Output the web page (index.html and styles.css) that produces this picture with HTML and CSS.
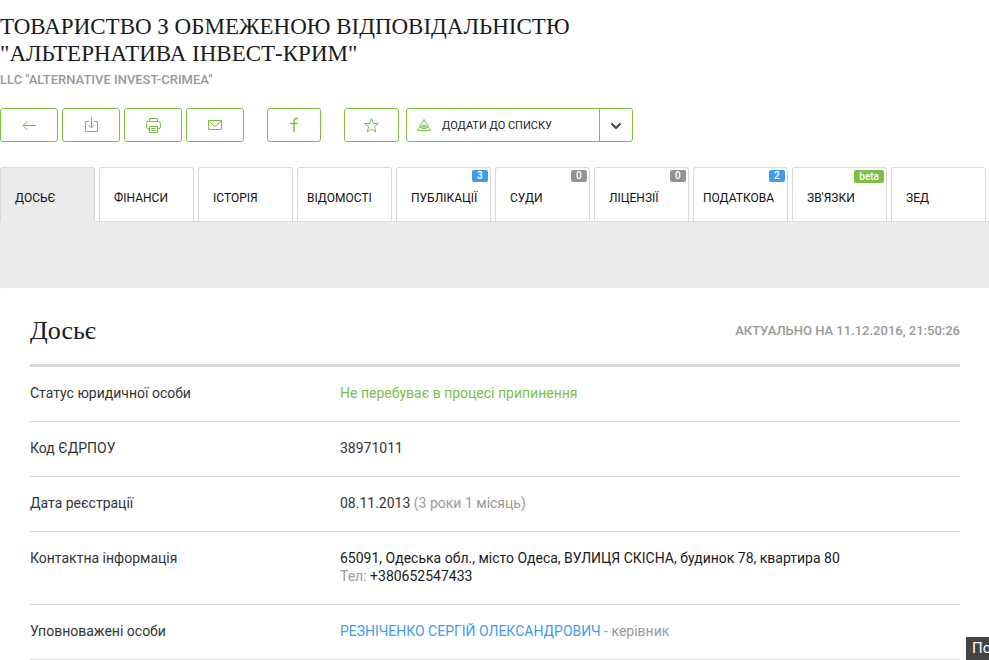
FILE: index.html
```html
<!DOCTYPE html>
<html lang="uk">
<head>
    <meta charset="UTF-8">
    <meta name="viewport" content="width=device-width, initial-scale=1.0">
    <title>Досьє</title>
    <link rel="stylesheet" href="styles.css">
</head>
<body>
    <header class="header">
        <h1>ТОВАРИСТВО З ОБМЕЖЕНОЮ ВІДПОВІДАЛЬНІСТЮ<br>"АЛЬТЕРНАТИВА ІНВЕСТ-КРИМ"</h1>
        <p class="subtitle">LLC "ALTERNATIVE INVEST-CRIMEA"</p>

        <div class="toolbar">
            <div class="tool-group">
                <button class="tool" aria-label="Назад">
                    <svg width="16" height="16" viewBox="0 0 16 16"><path d="M2 8.5H15M6.500 4L2 8.500L6.500 13"/></svg>
                </button>
                <button class="tool" aria-label="Завантажити">
                    <svg width="16" height="18" viewBox="0 0 16 18"><path d="M6 5.500H2.500V15.500H14.500V5.500H11M8.500 1V12M5.500 9L8.500 12L11.500 9"/></svg>
                </button>
                <button class="tool" aria-label="Друк">
                    <svg width="16" height="18" viewBox="0 0 16 18"><path d="M4.500 5.500V2.500H12.500V5.500M4.500 13.500H3.500V12.500H2.500Q1.500 12.500 1.500 11V7.500Q1.500 5.500 3.500 5.500H13.500Q15.500 5.500 15.500 7.500V11Q15.500 12.500 14 12.500H12.500M4.500 10.500H12.500V16.500H4.500ZM6.500 12.500H10.500M6.500 14.500H10.500"/></svg>
                </button>
                <button class="tool" aria-label="Надіслати поштою">
                    <svg width="16" height="16" viewBox="0 0 16 16"><path d="M1.500 3.500H14.500V12.500H1.500ZM1.500 4L8 9.500L14.500 4"/></svg>
                </button>
            </div>
            <button class="tool tool-small" aria-label="Facebook">
                <svg width="16" height="18" viewBox="0 0 16 18"><path class="bold" d="M12 2.500H10.500Q8 2.500 8 5V16M4 7.500H11.500"/></svg>
            </button>
            <div class="tool-group list-group">
                <button class="tool tool-star" aria-label="В обране">
                    <svg width="17" height="17" viewBox="0 0 17 17"><path d="M8.500 1.500L10.300 6.500H15.500L11.400 9.800L12.900 15L8.500 11.900L4.100 15L5.600 9.800L1.500 6.500H6.700Z"/></svg>
                </button>
                <div class="split">
                    <button class="split-main">
                        <svg width="16" height="16" viewBox="0 0 16 16"><path d="M8 2.500L14.500 13.500H1.500ZM4 10.500Q8 6 12 10.500M4 10.500Q8 13 12 10.500"/><circle cx="8" cy="10" r="1"/></svg>
                        ДОДАТИ ДО СПИСКУ
                    </button>
                    <button class="split-arrow" aria-label="Відкрити список">
                        <svg width="12" height="8" viewBox="0 0 12 8"><path d="M1.500 1.500L6 6L10.500 1.500"/></svg>
                    </button>
                </div>
            </div>
        </div>
    </header>

    <nav class="tabs">
        <a class="tab active" href="#">ДОСЬЄ</a>
        <a class="tab" href="#">ФІНАНСИ</a>
        <a class="tab" href="#">ІСТОРІЯ</a>
        <a class="tab wide" href="#">ВІДОМОСТІ</a>
        <a class="tab" href="#">ПУБЛІКАЦІЇ<span class="badge blue">3</span></a>
        <a class="tab" href="#">СУДИ<span class="badge">0</span></a>
        <a class="tab" href="#">ЛІЦЕНЗІЇ<span class="badge">0</span></a>
        <a class="tab wide" href="#">ПОДАТКОВА<span class="badge blue">2</span></a>
        <a class="tab" href="#">ЗВ'ЯЗКИ<span class="badge green">beta</span></a>
        <a class="tab" href="#">ЗЕД</a>
    </nav>

    <main class="content">
        <section class="card">
            <div class="card-header">
                <h2>Досьє</h2>
                <span class="updated">АКТУАЛЬНО НА 11.12.2016, 21:50:26</span>
            </div>
            <table class="info">
                <tr>
                    <th scope="row">Статус юридичної особи</th>
                    <td class="status">Не перебуває в процесі припинення</td>
                </tr>
                <tr>
                    <th scope="row">Код ЄДРПОУ</th>
                    <td>38971011</td>
                </tr>
                <tr>
                    <th scope="row">Дата реєстрації</th>
                    <td>08.11.2013 <span class="muted">(3 роки 1 місяць)</span></td>
                </tr>
                <tr>
                    <th scope="row">Контактна інформація</th>
                    <td class="dark">65091, Одеська обл., місто Одеса, ВУЛИЦЯ СКІСНА, будинок 78, квартира 80<br><span class="muted">Тел:</span> +380652547433</td>
                </tr>
                <tr>
                    <th scope="row">Уповноважені особи</th>
                    <td class="muted"><a href="#">РЕЗНІЧЕНКО СЕРГІЙ ОЛЕКСАНДРОВИЧ</a> - керівник</td>
                </tr>
            </table>
        </section>
    </main>

    <div class="corner">По</div>
</body>
</html>
```
FILE: styles.css
```css
* {
    box-sizing: border-box;
}
body {
    margin: 0;
    font-family: Roboto, "Liberation Sans", sans-serif;
    font-size: 14px;
    line-height: 18px;
    color: #333;
    background: #fff;
}
h1, h2 {
    margin: 0;
    font-family: "Roboto Slab", "Liberation Serif", serif;
    font-size: 23px;
    line-height: 27px;
    font-weight: 300;
    color: #1a1a1a;
}
h2 {
    font-size: 26px;
}
.header {
    padding-top: 13px;
}
.subtitle {
    margin: 4px 0 19px;
    font-size: 13px;
    font-weight: 500;
    color: #98999b;
}
.toolbar {
    display: flex;
    gap: 23px;
}
.tool-group {
    display: flex;
    gap: 4px;
}
.list-group {
    gap: 7px;
}
button {
    padding: 0;
    border: 0;
    background: none;
    font-family: inherit;
    cursor: pointer;
}
.tool {
    display: flex;
    align-items: center;
    justify-content: center;
    width: 58px;
    height: 34px;
    border: 1px solid #7ac143;
    border-radius: 3px;
}
.tool-small {
    width: 54px;
}
.tool-star {
    width: 55px;
}
svg {
    fill: none;
    stroke: #7ac143;
    stroke-width: 1;
}
.bold {
    stroke-width: 1.5;
}
.split {
    display: flex;
    width: 227px;
    height: 34px;
    border: 1px solid #7ac143;
    border-radius: 3px;
}
.split-main {
    flex: 1;
    display: flex;
    align-items: center;
    gap: 10px;
    padding-left: 9px;
    font-size: 11px;
    color: #222;
}
.split-arrow {
    width: 33px;
    border-left: 1px solid #7ac143;
}
.split-arrow svg {
    stroke: #444;
    stroke-width: 2;
}
.tabs {
    display: grid;
    grid-template-columns: repeat(10, 1fr);
    gap: 4px;
    margin-top: 25px;
    padding-right: 3px;
    border-bottom: 1px solid #d9d9d9;
}
.tab {
    position: relative;
    height: 54px;
    padding: 21px 0 0 14px;
    border: 1px solid #d9d9d9;
    border-bottom: 0;
    border-radius: 3px 3px 0 0;
    font-size: 12px;
    color: #111;
    text-decoration: none;
    white-space: nowrap;
}
.tab.wide {
    padding-left: 9px;
}
.tab.active {
    height: 55px;
    margin-bottom: -1px;
    background: #ebebeb;
}
.badge {
    position: absolute;
    top: 2px;
    right: 2px;
    min-width: 16px;
    padding: 0 5px;
    border-radius: 2px;
    background: #919396;
    color: #fff;
    font-size: 10px;
    font-weight: 500;
    line-height: 12px;
}
.badge.blue {
    background: #419bf1;
}
.badge.green {
    background: #7ac143;
    line-height: 13px;
}
.content {
    padding-top: 66px;
    background: #ebebeb;
}
.card {
    padding: 0 29px 0 30px;
    border-radius: 3px 0 0 0;
    background: #fff;
}
.card-header {
    display: flex;
    align-items: center;
    justify-content: space-between;
    padding: 29px 0 20px;
    border-bottom: 3px solid #d9d9d9;
}
.updated {
    font-size: 13px;
    font-weight: 500;
    color: #98999b;
}
.info {
    width: 100%;
    border-spacing: 0;
}
.info th, .info td {
    padding: 17px 0 19px;
    border-bottom: 1px solid #d9d9d9;
    text-align: left;
    vertical-align: top;
    font-weight: 400;
}
.info th {
    width: 310px;
}
.info .status {
    color: #7ac143;
}
.info .muted {
    color: #98999b;
}
.info .dark {
    color: #1a1a1a;
}
.info a {
    color: #419bf1;
    text-decoration: none;
}
.corner {
    position: fixed;
    right: 0;
    bottom: 0;
    width: 23px;
    height: 23px;
    padding-left: 6px;
    overflow: hidden;
    background: #444;
    color: #fff;
    font-size: 15px;
    line-height: 22px;
}
```
